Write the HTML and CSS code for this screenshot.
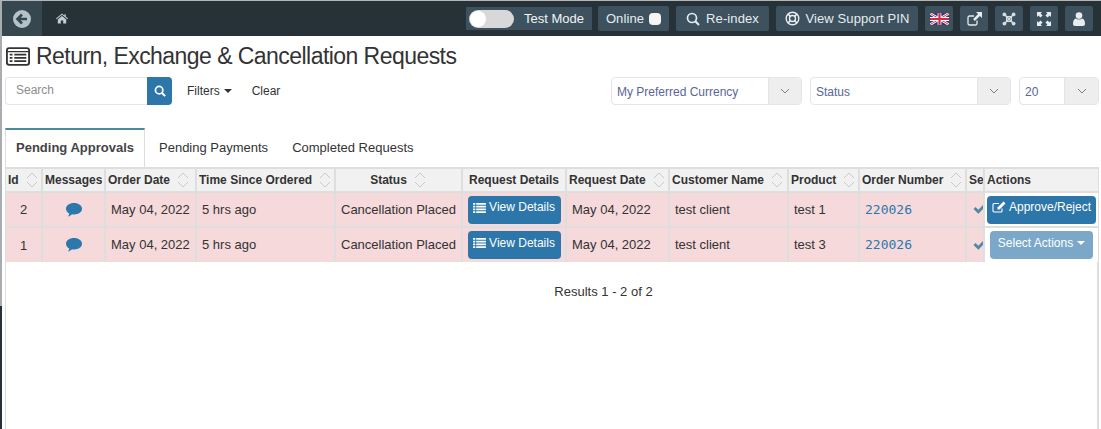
FILE: index.html
```html
<!DOCTYPE html>
<html lang="en">
<head>
<meta charset="utf-8">
<title>Return, Exchange &amp; Cancellation Requests</title>
<link rel="stylesheet" href="styles.css">
</head>
<body>
<svg class="defs" aria-hidden="true">
  <symbol id="sort" viewBox="0 0 14 22"><path d="M2 9l5-5 5 5M2 13l5 5 5-5" fill="none" stroke="#c9c9c9" stroke-width="1"/></symbol>
  <symbol id="chev" viewBox="0 0 10 6"><path d="M1 1l4 4 4-4" fill="none" stroke="#7a8194" stroke-width="1"/></symbol>
  <symbol id="list" viewBox="0 0 14 12"><path fill="currentColor" d="M0 1h2.4v2H0zM3.4 1H14v2H3.4zM0 4h2.4v2H0zM3.4 4H14v2H3.4zM0 7h2.4v2H0zM3.4 7H14v2H3.4zM0 10h2.4v2H0zM3.4 10H14v2H3.4z"/></symbol>
  <symbol id="bubble" viewBox="0 0 18 16"><path fill="#2b78ad" d="M9 1c4.700 0 8 2.500 8 5.700s-3.300 5.700-8 5.700c-.7 0-1.400 0-2-.2-1 1-2.400 1.900-4 2.300.7-.9 1.200-2 1.300-3C2.400 10.500 1 8.800 1 6.700 1 3.500 4.300 1 9 1z"/></symbol>
  <symbol id="check" viewBox="0 0 14 12"><path d="M1.500 6l3.800 3.800L12.500 2.500" fill="none" stroke="#4f8ba0" stroke-width="2.800"/></symbol>
</svg>
<div class="shell">
  <aside class="edge"><div class="edge-light"></div><div class="edge-dark"></div></aside>
  <div class="main">
    <header class="topbar">
      <a class="back" href="#"><svg width="20" height="20" viewBox="0 0 20 20"><circle cx="10" cy="10" r="9" fill="#b4c2c9"/><path d="M15 10H6M10 5.500L5.500 10l4.500 4.500" fill="none" stroke="#37474f" stroke-width="2.600"/></svg></a>
      <a class="home" href="#"><svg width="12" height="11" viewBox="0 0 12 10"><path fill="#c3ced3" d="M6 0l2.400 2V.8h1.300v2.300L12 5l-.6.700L6 1.300.6 5.700 0 5zM1.800 6L6 2.500 10.200 6v4H7.200V7H4.800v3h-3z"/></svg></a>
      <div class="tools">
        <div class="testmode"><span class="toggle"><span class="knob"></span></span><span>Test Mode</span></div>
        <a class="tool w-online" href="#"><span>Online</span><span class="dot"></span></a>
        <a class="tool w-reindex" href="#"><svg width="14" height="14" viewBox="0 0 14 14"><circle cx="6" cy="6" r="4.500" fill="none" stroke="#e6ecef" stroke-width="1.700"/><path d="M9.300 9.300L13 13" stroke="#e6ecef" stroke-width="2"/></svg><span>Re-index</span></a>
        <a class="tool w-pin" href="#"><svg width="15" height="15" viewBox="0 0 15 15"><circle cx="7.500" cy="7.500" r="6.300" fill="none" stroke="#e6ecef" stroke-width="1.400"/><circle cx="7.500" cy="7.500" r="3" fill="none" stroke="#e6ecef" stroke-width="1.400"/><path d="M3 3l2.400 2.400M12 3L9.600 5.400M3 12l2.400-2.400M12 12L9.600 9.600" stroke="#e6ecef" stroke-width="1.700"/></svg><span>View Support PIN</span></a>
        <a class="tool square" href="#"><svg width="19" height="12" viewBox="0 0 60 36"><rect width="60" height="36" fill="#27357f"/><path d="M0 0l60 36M60 0L0 36" stroke="#fff" stroke-width="8"/><path d="M0 0l60 36M60 0L0 36" stroke="#d3283f" stroke-width="3"/><path d="M30 0v36M0 18h60" stroke="#fff" stroke-width="12"/><path d="M30 0v36M0 18h60" stroke="#d3283f" stroke-width="7"/></svg></a>
        <a class="tool square" href="#"><svg width="15" height="14" viewBox="0 0 15 14"><path d="M10 8.500V11.500a1.500 1.500 0 0 1-1.500 1.500H2.500A1.500 1.500 0 0 1 1 11.500V5.500A1.500 1.500 0 0 1 2.500 4H7" fill="none" stroke="#e6ecef" stroke-width="1.300"/><path fill="#e6ecef" d="M9 0h6v6l-2.100-2.100-5 5-1.800-1.800 5-5z"/></svg></a>
        <a class="tool square" href="#"><svg width="14" height="14" viewBox="0 0 14 14"><g fill="#d5dde1"><circle cx="2.400" cy="2.400" r="1.900"/><circle cx="11.600" cy="2.400" r="1.900"/><circle cx="2.400" cy="11.600" r="1.900"/><circle cx="11.600" cy="11.600" r="1.900"/></g><path d="M3 3l8 8M11 3l-8 8" stroke="#d5dde1" stroke-width="1.500"/><rect x="4.600" y="4.600" width="4.800" height="4.800" fill="none" stroke="#d5dde1" stroke-width="1.300"/></svg></a>
        <a class="tool square" href="#"><svg width="14" height="14" viewBox="0 0 14 14"><path fill="#e6ecef" d="M0 0h5L3.600 1.400 5.600 3.400 3.400 5.600 1.400 3.600 0 5zM14 0v5L12.600 3.600 10.600 5.600 8.400 3.400 10.400 1.400 9 0zM0 14V9l1.400 1.400 2-2 2.200 2.200-2 2L5 14zM14 14H9l1.400-1.400-2-2 2.200-2.200 2 2L14 9z"/></svg></a>
        <a class="tool square" href="#"><svg width="12" height="14" viewBox="0 0 12 14"><circle cx="6" cy="3.600" r="3.300" fill="#e6ecef"/><path fill="#e6ecef" d="M0 12c0-3 1-5 3-5.400.8.700 1.800 1 3 1s2.200-.3 3-1c2 .4 3 2.400 3 5.400 0 1.200-.8 2-2 2H2c-1.200 0-2-.8-2-2z"/></svg></a>
      </div>
    </header>
    <main class="content">
      <h1 class="title"><svg width="24" height="19" viewBox="0 0 26 20"><rect x="1" y="1" width="24" height="18" rx="2.500" fill="none" stroke="#333" stroke-width="2"/><path fill="#333" d="M1 4h24v1.500H1zM4 7h3v2H4zM9 7h13v2H9zM4 10.500h3v2H4zM9 10.500h13v2H9zM4 14h3v2H4zM9 14h13v2H9z"/></svg><span>Return, Exchange &amp; Cancellation Requests</span></h1>
      <div class="toolbar">
        <div class="search"><span class="search-input">Search</span><span class="search-btn"><svg width="12" height="12" viewBox="0 0 14 14"><circle cx="6" cy="6" r="4.300" fill="none" stroke="#fff" stroke-width="2"/><path d="M9.300 9.300L13 13" stroke="#fff" stroke-width="2.400"/></svg></span></div>
        <a class="link filters" href="#">Filters<span class="caret dark"></span></a>
        <a class="link clear" href="#">Clear</a>
        <div class="selects">
          <div class="select w-currency"><span class="select-value">My Preferred Currency</span><span class="select-arrow"><svg width="10" height="6"><use href="#chev"/></svg></span></div>
          <div class="select w-status"><span class="select-value">Status</span><span class="select-arrow"><svg width="10" height="6"><use href="#chev"/></svg></span></div>
          <div class="select w-size"><span class="select-value">20</span><span class="select-arrow"><svg width="10" height="6"><use href="#chev"/></svg></span></div>
        </div>
      </div>
      <nav class="tabs">
        <a class="tab active" href="#">Pending Approvals</a>
        <a class="tab" href="#">Pending Payments</a>
        <a class="tab" href="#">Completed Requests</a>
      </nav>
      <section class="panel">
        <table class="grid">
          <colgroup>
            <col class="c-id"><col class="c-msg"><col class="c-odate"><col class="c-time"><col class="c-status"><col class="c-details"><col class="c-rdate"><col class="c-cust"><col class="c-prod"><col class="c-order"><col class="c-se"><col class="c-act">
          </colgroup>
          <thead>
            <tr>
              <th><div class="th-in"><span>Id</span><svg class="sort"><use href="#sort"/></svg></div></th>
              <th><div class="th-in"><span>Messages</span></div></th>
              <th><div class="th-in"><span>Order Date</span><svg class="sort"><use href="#sort"/></svg></div></th>
              <th><div class="th-in"><span>Time Since Ordered</span><svg class="sort"><use href="#sort"/></svg></div></th>
              <th><div class="th-in center"><span>Status</span><svg class="sort"><use href="#sort"/></svg></div></th>
              <th><div class="th-in center"><span>Request Details</span></div></th>
              <th><div class="th-in"><span>Request Date</span><svg class="sort"><use href="#sort"/></svg></div></th>
              <th><div class="th-in"><span>Customer Name</span><svg class="sort"><use href="#sort"/></svg></div></th>
              <th><div class="th-in"><span>Product</span><svg class="sort"><use href="#sort"/></svg></div></th>
              <th><div class="th-in"><span>Order Number</span><svg class="sort"><use href="#sort"/></svg></div></th>
              <th class="th-se"><div class="th-in"><span>Se</span></div></th>
              <th class="th-act"><div class="th-in"><span>Actions</span></div></th>
            </tr>
          </thead>
          <tbody>
            <tr>
              <td class="mid">2</td>
              <td class="mid"><svg class="bubble"><use href="#bubble"/></svg></td>
              <td>May 04, 2022</td><td>5 hrs ago</td><td>Cancellation Placed</td>
              <td class="mid"><a class="btn primary details" href="#"><svg width="13" height="11"><use href="#list"/></svg>View Details</a></td>
              <td>May 04, 2022</td><td>test client</td><td>test 1</td>
              <td><a class="order" href="#">220026</a></td>
              <td class="se"><svg width="14" height="12"><use href="#check"/></svg></td>
              <td class="act"><a class="btn primary approve" href="#"><svg width="14" height="12" viewBox="0 0 14 12"><path d="M10 7.500V10a1 1 0 0 1-1 1H2a1 1 0 0 1-1-1V3.500a1 1 0 0 1 1-1h5" fill="none" stroke="#fff" stroke-width="1.100"/><path fill="#fff" d="M11.500.5l2 2-6 6H5.500v-2z"/></svg>Approve/Reject</a></td>
            </tr>
            <tr>
              <td class="mid">1</td>
              <td class="mid"><svg class="bubble"><use href="#bubble"/></svg></td>
              <td>May 04, 2022</td><td>5 hrs ago</td><td>Cancellation Placed</td>
              <td class="mid"><a class="btn primary details" href="#"><svg width="13" height="11"><use href="#list"/></svg>View Details</a></td>
              <td>May 04, 2022</td><td>test client</td><td>test 3</td>
              <td><a class="order" href="#">220026</a></td>
              <td class="se"><svg width="14" height="12"><use href="#check"/></svg></td>
              <td class="act"><a class="btn muted select-actions" href="#">Select Actions<span class="caret"></span></a></td>
            </tr>
          </tbody>
        </table>
        <p class="results">Results 1 - 2 of 2</p>
      </section>
    </main>
  </div>
</div>
</body>
</html>
```

FILE: styles.css
```css
* { box-sizing: border-box; }
html, body { margin: 0; height: 100%; overflow: hidden; }
body { font-family: "Liberation Sans", Arial, sans-serif; font-size: 13px; color: #333; background: #fff; }
a { color: inherit; text-decoration: none; }
.defs { position: absolute; width: 0; height: 0; }

.shell { display: flex; height: 429px; border-top: 1px solid #b4b6b8; }
.edge { width: 2px; flex: none; display: flex; flex-direction: column; }
.edge-light { height: 305px; background: #a9adb1; }
.edge-dark { flex: 1; background: #263238; }
.main { flex: 1; min-width: 0; display: flex; flex-direction: column; }

.topbar { height: 35px; flex: none; background: #263238; display: flex; align-items: center; color: #e6ecef; }
.back { width: 40px; height: 35px; background: #37474f; display: flex; align-items: center; justify-content: center; }
.home { width: 40px; display: flex; justify-content: center; }
.tools { margin-left: auto; display: flex; align-items: center; gap: 7px; padding-right: 8px; }
.tool { height: 25px; background: #3d525e; border-radius: 2px; display: flex; align-items: center; justify-content: center; gap: 6px; font-size: 13px; letter-spacing: .1px; }
.tool.square { width: 28px; }
.w-online { width: 71px; gap: 5px; }
.w-reindex { width: 93px; }
.w-pin { width: 142px; }
.testmode { height: 23px; width: 126px; margin-right: -1px; background: #3d525e; display: flex; align-items: center; gap: 10px; padding-left: 3px; font-size: 13px; color: #f1f4f5; }
.toggle { width: 45px; height: 18px; border-radius: 9px; background: #d8d8d8; display: flex; align-items: center; padding-left: 1px; }
.knob { width: 16px; height: 16px; border-radius: 50%; background: #fff; }
.dot { width: 12px; height: 12px; border-radius: 4px; background: #f5f5f5; }

.content { flex: 1; min-height: 0; padding: 0 2px 0 3px; display: flex; flex-direction: column; }
.title { margin: 0; height: 41px; padding: 0 0 0 1px; display: flex; align-items: center; gap: 6px; font-size: 23px; font-weight: 400; letter-spacing: -.55px; color: #333; }

.toolbar { height: 28px; margin-bottom: 23px; display: flex; align-items: center; }
.search { display: flex; width: 167px; height: 28px; }
.search-input { flex: 1; border: 1px solid #e3e5ea; border-right: 0; border-radius: 4px 0 0 4px; padding: 0 10px; line-height: 25px; font-size: 12px; color: #8d8d8d; }
.search-btn { width: 25px; background: #2c76aa; border-radius: 0 4px 4px 0; display: flex; align-items: center; justify-content: center; }
.link { font-size: 12px; color: #333; }
.filters { margin-left: 15px; display: flex; align-items: center; }
.clear { margin-left: 20px; }
.caret { display: inline-block; margin-left: 4px; border-left: 4px solid transparent; border-right: 4px solid transparent; border-top: 4px solid #fff; }
.caret.dark { border-top-color: #333; }
.selects { margin-left: auto; display: flex; gap: 8px; }
.select { height: 28px; display: flex; border: 1px solid #e3e5ea; border-radius: 4px; overflow: hidden; color: #5a6595; font-size: 12px; }
.select-value { flex: 1; padding-left: 5px; line-height: 28px; }
.select-arrow { width: 33px; background: #eeeeee; border-left: 1px solid #e3e5ea; display: flex; align-items: center; justify-content: center; }
.w-currency { width: 191px; }
.w-status { width: 201px; }
.w-size { width: 80px; }
.w-size .select-arrow { width: 34px; }

.tabs { height: 39px; flex: none; display: flex; }
.tab { padding: 0 10px 0 14px; line-height: 36px; font-size: 13px; color: #333; border-top: 2px solid transparent; }
.tab.active { width: 140px; padding: 0; text-align: center; font-weight: 700; color: #444; border-top-color: #4f8ba0; border-left: 1px solid #ddd; border-right: 1px solid #ddd; background: #fff; }

.panel { flex: 1; min-height: 0; border-left: 1px solid #ddd; border-right: 2px solid #ddd; }
.grid { width: 1092px; table-layout: fixed; border-collapse: collapse; }
.c-id { width: 36px; } .c-msg { width: 63px; } .c-odate { width: 91px; } .c-time { width: 139px; }
.c-status { width: 127px; } .c-details { width: 104px; } .c-rdate { width: 103px; } .c-cust { width: 119px; }
.c-prod { width: 71px; } .c-order { width: 107px; } .c-se { width: 18px; } .c-act { width: 114px; }
th, td { border: 2px solid #dedede; white-space: nowrap; overflow: hidden; }
th:first-child, td:first-child { border-left: 0; }
th { height: 24px; background: #f1f1f1; padding: 0 2px; font-size: 12px; font-weight: 700; color: #333; text-align: left; }
.th-se { padding: 0 0 0 2px; }
.th-in { display: flex; align-items: center; height: 20px; overflow: hidden; }
.th-in.center { justify-content: center; }
.sort { width: 14px; height: 22px; margin-left: 6px; flex: none; }
td { height: 35px; background: #f5d9db; padding: 0 5px 1px; font-size: 13px; color: #333; }
tbody tr:last-child td { border-bottom: 0; }
td.mid { text-align: center; padding: 0; }
td.se { padding: 0 0 0 6px; }
td.act { background: #fff; border-right: 0; padding: 0; text-align: center; }
.th-act { border-right: 0; }
.bubble { width: 18px; height: 16px; display: block; margin: 0 auto; }
.order { font-family: "DejaVu Sans Mono", monospace; font-size: 13px; color: #2b78ad; }
.btn { display: inline-flex; align-items: center; justify-content: center; height: 28px; border-radius: 4px; color: #fff; font-size: 12px; padding-bottom: 5px; vertical-align: middle; }
.btn svg { margin-right: 3px; }
.primary { background: #2c76aa; }
.muted { background: #7ba8c9; }
.details { width: 93px; }
.approve { width: 109px; }
.select-actions { width: 103px; }
.results { margin: 22px 0 0; padding-left: 104px; text-align: center; font-size: 13px; color: #333; }
```
